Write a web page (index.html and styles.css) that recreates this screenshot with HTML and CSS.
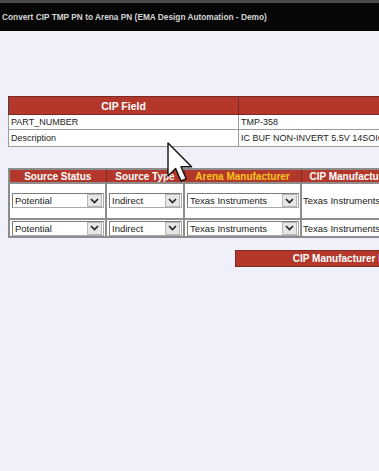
FILE: index.html
```html
<!DOCTYPE html>
<html lang="en">
<head>
  <meta charset="UTF-8">
  <title>Convert CIP TMP PN to Arena PN</title>
  <link rel="stylesheet" href="styles.css">
</head>
<body>
  <div class="titlebar">Convert CIP TMP PN to Arena PN (EMA Design Automation - Demo)</div>

  <div class="page">
    <table class="fields">
      <col class="f1"><col class="f2">
      <tr><th>CIP Field</th><th></th></tr>
      <tr><td>PART_NUMBER</td><td>TMP-358</td></tr>
      <tr class="tall"><td>Description</td><td>IC BUF NON-INVERT 5.5V 14SOIC</td></tr>
    </table>

    <table class="sources">
      <col class="s1"><col class="s2"><col class="s3"><col class="s4">
      <tr>
        <th>Source Status</th>
        <th>Source Type</th>
        <th class="arena">Arena Manufacturer</th>
        <th>CIP Manufacturer</th>
      </tr>
      <tr class="first">
        <td><div class="sel"><span>Potential</span><i class="arrow"><svg width="9" height="6" viewBox="0 0 9 6"><path d="M1 1 L4.5 4.5 L8 1" fill="none" stroke="#222" stroke-width="1.6"/></svg></i></div></td>
        <td><div class="sel"><span>Indirect</span><i class="arrow"><svg width="9" height="6" viewBox="0 0 9 6"><path d="M1 1 L4.5 4.5 L8 1" fill="none" stroke="#222" stroke-width="1.6"/></svg></i></div></td>
        <td><div class="sel"><span>Texas Instruments</span><i class="arrow"><svg width="9" height="6" viewBox="0 0 9 6"><path d="M1 1 L4.5 4.5 L8 1" fill="none" stroke="#222" stroke-width="1.6"/></svg></i></div></td>
        <td class="plain">Texas Instruments</td>
      </tr>
      <tr>
        <td><div class="sel"><span>Potential</span><i class="arrow"><svg width="9" height="6" viewBox="0 0 9 6"><path d="M1 1 L4.5 4.5 L8 1" fill="none" stroke="#222" stroke-width="1.6"/></svg></i></div></td>
        <td><div class="sel"><span>Indirect</span><i class="arrow"><svg width="9" height="6" viewBox="0 0 9 6"><path d="M1 1 L4.5 4.5 L8 1" fill="none" stroke="#222" stroke-width="1.6"/></svg></i></div></td>
        <td><div class="sel"><span>Texas Instruments</span><i class="arrow"><svg width="9" height="6" viewBox="0 0 9 6"><path d="M1 1 L4.5 4.5 L8 1" fill="none" stroke="#222" stroke-width="1.6"/></svg></i></div></td>
        <td class="plain">Texas Instruments</td>
      </tr>
    </table>

    <div class="actions">
      <button class="btn">CIP Manufacturer PN</button>
    </div>
  </div>

  <!-- mouse pointer caught in the capture -->
  <svg class="cursor" width="26" height="40" viewBox="0 0 13 20">
    <path d="M0.5 0.5 V17 L4.3 13.3 L7 19.5 L9.6 18.4 L7 12.4 H12.3 Z" fill="#fff" stroke="#111" stroke-width="0.7" stroke-linejoin="round"/>
  </svg>
</body>
</html>
```

FILE: styles.css
```css
html, body {
  margin: 0;
  height: 100%;
  overflow: hidden;
}

body {
  background: #f0f0fa;
  font-family: "Liberation Sans", Arial, sans-serif;
  color: #222;
  position: relative;
}

.titlebar {
  height: 28px;
  border-top: 3px solid #4a4a4a;
  background: #060606;
  color: #d6d6d6;
  font-size: 8.3px;
  font-weight: bold;
  line-height: 28px;
  padding-left: 2px;
  white-space: nowrap;
}

.page {
  padding: 65px 0 0 8px;
}

table {
  border-collapse: collapse;
  table-layout: fixed;
}

th {
  background: #b3382b;
  color: #fff;
  font-weight: bold;
  text-align: center;
  padding: 0;
  white-space: nowrap;
  overflow: hidden;
}

td {
  white-space: nowrap;
  overflow: hidden;
}

/* field table */
.fields {
  width: 460px;
  background: #fff;
  border: 1px solid #8c8c8c;
  font-size: 9px;
}

.f1 { width: 230px; }
.f2 { width: 230px; }

.fields th {
  height: 17px;
  font-size: 10.5px;
  border: 1px solid #7a2a22;
  border-left-color: #444;
}

.fields td {
  height: 14px;
  padding: 0 2px;
  border: 1px solid #9a9a9a;
}

.fields .tall td {
  height: 16px;
}

/* sources table */
.sources {
  margin-top: 21px;
  width: 392px;
  background: #fff;
  border: 2px solid #8c8c8c;
  font-size: 9.5px;
}

.s1 { width: 97px; }
.s2 { width: 78px; }
.s3 { width: 117px; }
.s4 { width: 100px; }

.sources th {
  height: 12px;
  font-size: 10px;
  border: 1px solid #7a2a22;
  border-left-color: #555;
}

.sources th.arena {
  color: #f7c51c;
}

.sources td {
  height: 16px;
  padding: 0 1px 0 2px;
  border: 1px solid #8e8e8e;
  border-width: 2px 2px 1px 1px;
}

.sources .first td {
  height: 15px;
  padding-top: 9px;
  padding-bottom: 10px;
}

.sources td.plain {
  padding-left: 1px;
}

.sel {
  display: flex;
  align-items: center;
  height: 13px;
  border: 1px solid #7c7c7c;
  border-right-color: #aaa;
  border-bottom-color: #aaa;
  background: #fff;
}

.sel span {
  flex: 1;
  padding-left: 2px;
  overflow: hidden;
}

.arrow {
  display: flex;
  align-items: center;
  justify-content: center;
  width: 13px;
  height: 11px;
  margin-right: 1px;
  background: #e6e6e6;
  border: 1px solid #b8b8b8;
}

.actions {
  margin-top: 12px;
  padding-left: 227px;
}

.btn {
  display: block;
  width: 215px;
  height: 17px;
  padding: 0;
  background: #b3382b;
  border: 1px solid #7c2a22;
  color: #fff;
  font-family: "Liberation Sans", Arial, sans-serif;
  font-size: 10px;
  font-weight: bold;
}

.cursor {
  position: absolute;
  left: 167px;
  top: 142px;
}
```
